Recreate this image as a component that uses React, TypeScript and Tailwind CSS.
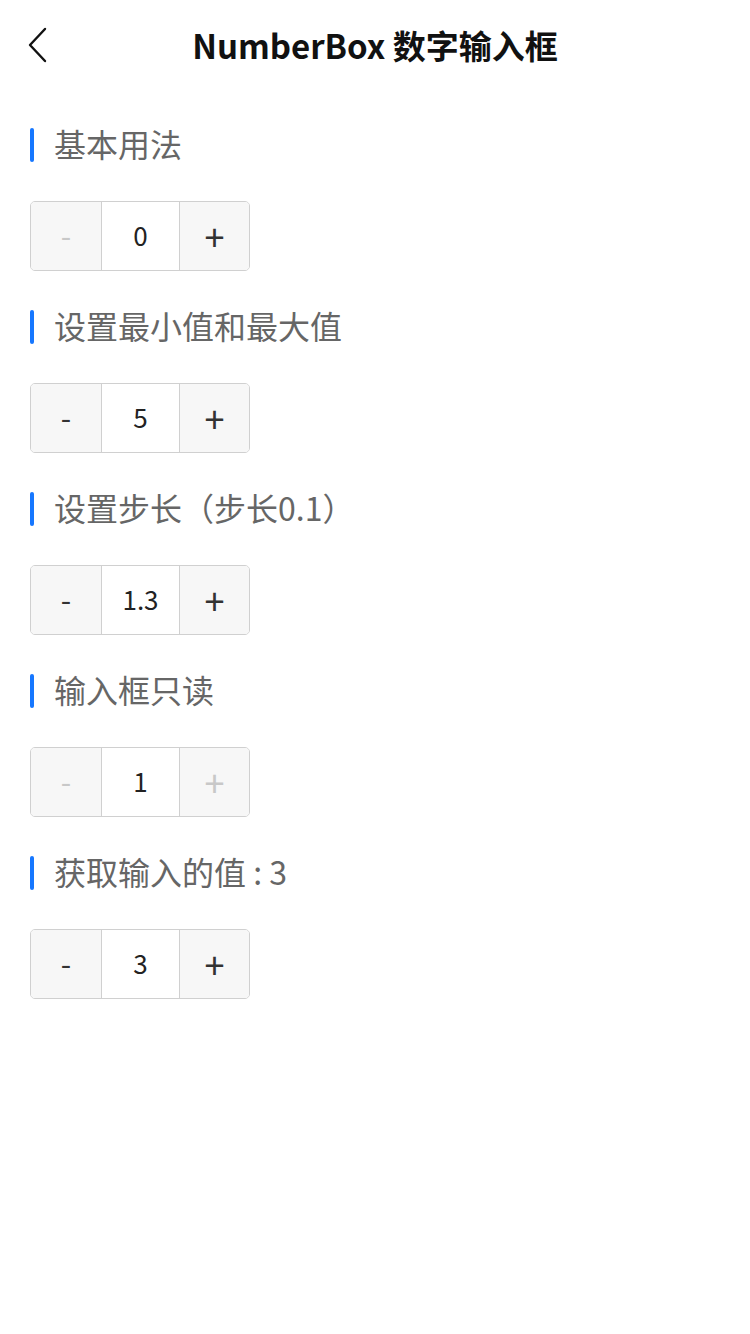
import React, { useState } from "react";

const font = { fontFamily: '"Noto Sans CJK SC", "Noto Sans", sans-serif' };

function NumberBox({ value, minusDisabled, plusDisabled }: { value: string; minusDisabled?: boolean; plusDisabled?: boolean }) {
  return (
    <div className="flex h-[70px] w-[220px] overflow-hidden rounded-[5px] border border-[#d0d0d0]">
      <div className={`flex w-[70px] items-center justify-center bg-[#f7f7f7] text-[30px] leading-none ${minusDisabled ? "text-[#c8c8c8]" : "text-[#333]"}`}>
        <span className="-mt-[4px]">-</span>
      </div>
      <div className="flex w-[79px] items-center justify-center border-x border-[#d0d0d0] bg-white text-[26px] leading-none text-[#222]">
        <span className="-mt-[2px]">{value}</span>
      </div>
      <div className={`flex flex-1 items-center justify-center bg-[#f7f7f7] text-[36px] leading-none ${plusDisabled ? "text-[#c8c8c8]" : "text-[#333]"}`}>
        <span className="-mt-[3px]">+</span>
      </div>
    </div>
  );
}

function Section({ title, children }: { title: string; children: React.ReactNode }) {
  return (
    <div className="h-[182px] px-[30px] pt-[24px]">
      <div className="flex h-[60px] items-center">
        <div className="-mt-[2px] h-[34px] w-[4px] rounded-full bg-[#1677ff]" />
        <div className="-mt-[6px] ml-[20px] text-[32px] leading-none text-[#666]">{title}</div>
      </div>
      <div className="mt-[25px]">{children}</div>
    </div>
  );
}

export default function App() {
  const [v] = useState(3);
  return (
    <div className="min-h-[1334px] w-[750px] bg-white" style={font}>
      <div className="relative flex h-[92px] items-center justify-center">
        <svg className="absolute left-[26px] top-[27px]" width="24" height="36" viewBox="0 0 24 36" fill="none">
          <path d="M19 2 L4 18 L19 34" stroke="#111" strokeWidth="2.4" strokeLinecap="round" strokeLinejoin="round" />
        </svg>
        <div className="text-[33px] font-bold text-[#111]">NumberBox 数字输入框</div>
      </div>
      <Section title="基本用法">
        <NumberBox value="0" minusDisabled />
      </Section>
      <Section title="设置最小值和最大值">
        <NumberBox value="5" />
      </Section>
      <Section title="设置步长（步长0.1）">
        <NumberBox value="1.3" />
      </Section>
      <Section title="输入框只读">
        <NumberBox value="1" minusDisabled plusDisabled />
      </Section>
      <Section title={`获取输入的值 : ${v}`}>
        <NumberBox value={String(v)} />
      </Section>
    </div>
  );
}
